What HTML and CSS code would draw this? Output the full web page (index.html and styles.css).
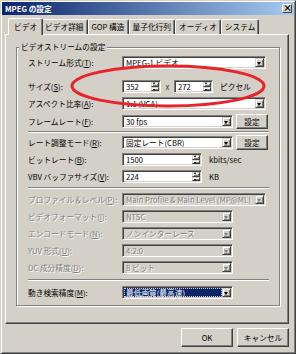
FILE: index.html
```html
<!DOCTYPE html>
<html>
  <head>
    <title>MPEG の設定</title>
    <meta http-equiv="Content-Type" content="text/html; charset=utf-8" />
    <link rel="stylesheet" href="styles.css">
  </head>
  <body>

    <div class="window">
        <div class="titlebar">
            <span class="title">MPEG の設定</span>
            <span class="close">×</span>
        </div>

        <div class="body">
            <div class="tabs">
                <div class="tab active">ビデオ</div>
                <div class="tab">ビデオ詳細</div>
                <div class="tab">GOP 構造</div>
                <div class="tab">量子化行列</div>
                <div class="tab">オーディオ</div>
                <div class="tab">システム</div>
            </div>

            <div class="panel">
                <div class="group">
                    <div class="group_title">ビデオストリームの設定</div>

                    <div class="row first">
                        <span class="lbl">ストリーム形式(<u>T</u>):</span>
                        <div class="select"><span class="val">MPEG-1 ビデオ</span><span class="arrow"></span></div>
                    </div>
                    <div class="row size">
                        <span class="lbl">サイズ(<u>S</u>):</span>
                        <div class="spin w352"><span class="num">352</span><span class="spinbtn"><i class="up"></i><i class="down"></i></span></div>
                        <span class="times">x</span>
                        <div class="spin w352"><span class="num">272</span><span class="spinbtn"><i class="up"></i><i class="down"></i></span></div>
                        <span class="unit">ピクセル</span>
                    </div>
                    <div class="row">
                        <span class="lbl">アスペクト比率(<u>A</u>):</span>
                        <div class="select"><span class="val">1:1 (VGA)</span><span class="arrow"></span></div>
                    </div>
                    <div class="row gap1">
                        <span class="lbl">フレームレート(<u>F</u>):</span>
                        <div class="select short"><span class="val">30 fps</span><span class="arrow"></span></div>
                        <button class="btn small">設定</button>
                    </div>

                    <div class="sep"></div>

                    <div class="row">
                        <span class="lbl">レート調整モード(<u>R</u>):</span>
                        <div class="select short"><span class="val">固定レート(CBR)</span><span class="arrow"></span></div>
                        <button class="btn small">設定</button>
                    </div>
                    <div class="row">
                        <span class="lbl">ビットレート(<u>B</u>):</span>
                        <div class="spin wide"><span class="num">1500</span><span class="spinbtn"><i class="up"></i><i class="down"></i></span></div>
                        <span class="unit">kbits/sec</span>
                    </div>
                    <div class="row">
                        <span class="lbl">VBV バッファサイズ(<u>V</u>):</span>
                        <div class="spin wide"><span class="num">224</span><span class="spinbtn"><i class="up"></i><i class="down"></i></span></div>
                        <span class="unit">KB</span>
                    </div>

                    <div class="sep mid"></div>

                    <div class="row dis">
                        <span class="lbl">プロファイル＆レベル(<u>P</u>):</span>
                        <div class="select"><span class="val">Main Profile &amp; Main Level (MP@ML)</span><span class="arrow"></span></div>
                    </div>
                    <div class="row dis">
                        <span class="lbl">ビデオフォーマット(<u>I</u>):</span>
                        <div class="select short"><span class="val">NTSC</span><span class="arrow"></span></div>
                    </div>
                    <div class="row dis">
                        <span class="lbl">エンコードモード(<u>N</u>):</span>
                        <div class="select short"><span class="val">ノンインターレース</span><span class="arrow"></span></div>
                    </div>
                    <div class="row dis">
                        <span class="lbl">YUV 形式(<u>U</u>):</span>
                        <div class="select short"><span class="val">4:2:0</span><span class="arrow"></span></div>
                    </div>
                    <div class="row dis">
                        <span class="lbl">DC 成分精度(<u>D</u>):</span>
                        <div class="select short"><span class="val">8 ビット</span><span class="arrow"></span></div>
                    </div>

                    <div class="sep last"></div>

                    <div class="row last">
                        <span class="lbl">動き検索精度(<u>M</u>):</span>
                        <div class="select short focus"><span class="val">最低画質(最高速)</span><span class="arrow"></span></div>
                    </div>
                </div>
            </div>

            <div class="buttons">
                <button class="btn">OK</button>
                <button class="btn">キャンセル</button>
            </div>
        </div>

        <svg class="mark" width="296" height="354" viewBox="0 0 296 354">
            <ellipse cx="168" cy="86" rx="96" ry="20" fill="none" stroke="#e8232a" stroke-width="3"/>
        </svg>
    </div>

  </body>
</html>
```

FILE: styles.css
```css
body {
    margin: 0;
    padding: 0;
    font-family: "Noto Sans CJK JP", "DejaVu Sans", sans-serif;
    font-size: 7.7px;
    color: #000;
    background: #d4d0c8;
}

u {
    text-decoration: underline;
    text-underline-offset: 1px;
}

.window {
    position: relative;
    width: 296px;
    height: 354px;
    box-sizing: border-box;
    border: 1px solid;
    border-color: #d4d0c8 #404040 #404040 #d4d0c8;
    box-shadow: inset 1px 1px #fff, inset -1px -1px #808080;
    padding: 1px;
    background: #d4d0c8;
    display: flex;
    flex-direction: column;
}

.titlebar {
    height: 13px;
    flex: none;
    display: flex;
    align-items: center;
    justify-content: space-between;
    padding: 0 2px 0 3px;
    background: linear-gradient(to right, #0a246a, #a6caf0);
    color: #fff;
    font-weight: bold;
}
.close {
    width: 10px;
    height: 9px;
    box-sizing: border-box;
    border: 1px solid;
    border-color: #fff #404040 #404040 #fff;
    background: #d4d0c8;
    color: #000;
    font-size: 9px;
    line-height: 6px;
    text-align: center;
}

.body {
    flex: 1;
    display: flex;
    flex-direction: column;
    padding: 2px 5px 5px 3px;
}

/* tabs */
.tabs {
    height: 17px;
    flex: none;
    display: flex;
    align-items: flex-end;
    padding-left: 5px;
}
.tab {
    height: 14px;
    line-height: 14px;
    padding: 0 3px;
    border: 1px solid;
    border-bottom: none;
    border-color: #fff #404040 transparent #fff;
    box-shadow: inset -1px 0 #808080;
    border-radius: 2px 2px 0 0;
    white-space: nowrap;
}
.tab.active {
    position: relative;
    z-index: 1;
    height: 16px;
    line-height: 15px;
    margin: 0 -2px -1px;
    padding: 0 5px;
    background: #d4d0c8;
}

.panel {
    flex: 1;
    border: 1px solid;
    border-color: #fff #404040 #404040 #fff;
    box-shadow: inset -1px -1px #808080;
}

/* group box */
.group {
    margin: 12px 8px 0 10px;
    padding: 0 10px 4px 11px;
    border: 1px solid #808080;
    box-shadow: inset 1px 1px #fff, 1px 1px #fff;
}
.group_title {
    display: table;
    margin: -6px 0 0 -9px;
    padding: 0 2px;
    line-height: 10px;
    background: #d4d0c8;
}

.row {
    height: 17px;
    display: flex;
    align-items: center;
}
.row.first { margin-top: 2px; }
.row.size { margin-top: 7px; }
.row.gap1 { margin-top: 1px; }
.lbl {
    width: 94px;
    flex: none;
    white-space: nowrap;
}

.sep {
    border-top: 1px solid #808080;
    border-bottom: 1px solid #fff;
    margin: 1px 0;
}
.sep.mid { margin: 2px 0; }
.sep.last { margin: 3px 0; }

/* sunken controls */
.select, .spin {
    height: 13px;
    box-sizing: border-box;
    display: flex;
    background: #fff;
    border: 1px solid;
    border-color: #808080 #fff #fff #808080;
    box-shadow: inset 1px 1px #404040, inset -1px -1px #d4d0c8;
    padding: 1px;
}
.select { width: 144px; }
.select.short { width: 111px; }
.val, .num {
    flex: 1;
    padding-left: 2px;
    line-height: 9px;
    white-space: nowrap;
    overflow: hidden;
}
.arrow, .spinbtn i {
    display: block;
    box-sizing: border-box;
    border: 1px solid;
    border-color: #d4d0c8 #404040 #404040 #d4d0c8;
    box-shadow: inset 1px 1px #fff, inset -1px -1px #808080;
    background: #d4d0c8;
    position: relative;
}
.arrow {
    width: 9px;
    flex: none;
}
.arrow::after {
    content: "";
    position: absolute;
    left: 1px;
    top: 3px;
    border: 2.5px solid transparent;
    border-top: 3px solid #000;
    border-bottom: none;
}

.spin.w352 { width: 39px; }
.spin.wide { width: 80px; }
.spinbtn {
    width: 8px;
    flex: none;
    display: flex;
    flex-direction: column;
}
.spinbtn i {
    flex: 1;
}
.spinbtn i::after {
    content: "";
    position: absolute;
    left: 1px;
    border: 2px solid transparent;
    border-left-width: 1.5px;
    border-right-width: 1.5px;
}
.spinbtn .up::after {
    top: -1px;
    border-top: none;
    border-bottom: 2px solid #000;
}
.spinbtn .down::after {
    top: 1px;
    border-bottom: none;
    border-top: 2px solid #000;
}

.times {
    width: 13px;
    text-align: center;
    color: #404040;
}
.unit {
    margin-left: 7px;
}

/* disabled rows */
.dis .lbl, .dis .val {
    color: #808080;
    text-shadow: 1px 1px #fff;
}
.dis .select {
    background: #d4d0c8;
}
.dis .arrow::after {
    border-top-color: #808080;
}

.focus .val {
    background: #0a246a;
    color: #fff;
    outline: 1px dotted #d4d0c8;
    outline-offset: -1px;
}

/* buttons */
.btn {
    font: inherit;
    color: #000;
    width: 52px;
    height: 19px;
    padding: 0;
    border: 1px solid;
    border-color: #fff #404040 #404040 #fff;
    box-shadow: inset -1px -1px #808080, inset 1px 1px #d4d0c8;
    background: #d4d0c8;
}
.btn.small {
    width: 32px;
    height: 15px;
    margin-left: 3px;
}
.buttons {
    display: flex;
    justify-content: flex-end;
    gap: 4px;
    margin-top: 4px;
}

.mark {
    position: absolute;
    left: -1px;
    top: -1px;
    pointer-events: none;
}
```
